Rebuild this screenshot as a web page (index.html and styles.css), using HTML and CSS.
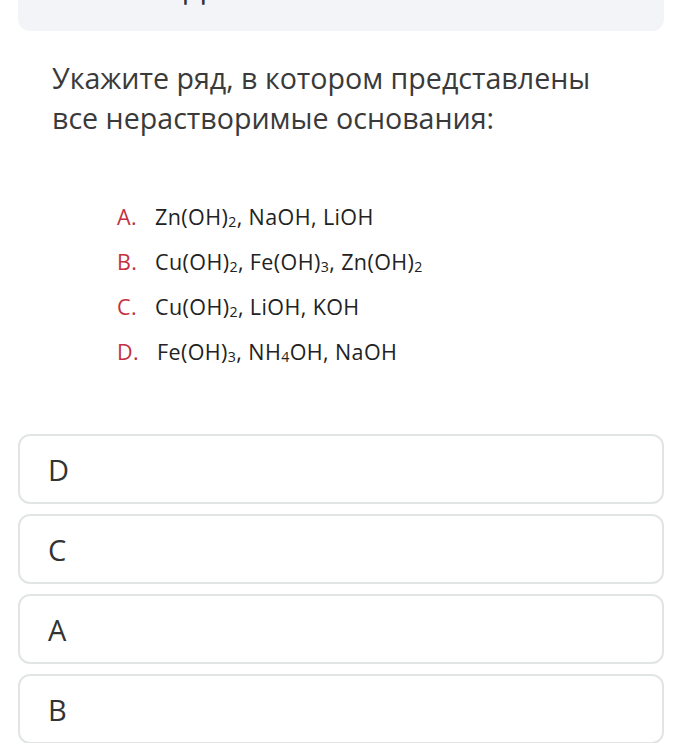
FILE: index.html
```html
<!DOCTYPE html>
<html lang="ru">
<head>
<meta charset="utf-8">
<link rel="stylesheet" href="styles.css">
</head>
<body>
<div class="page">
  <div class="head-card">
    <div class="head-title">Дополнительно</div>
  </div>
  <div class="question">Укажите ряд, в котором представлены все нерастворимые основания:</div>
  <ul class="chem">
    <li class="chem-row"><span class="chem-key">A.</span><span class="chem-val">Zn(OH)<sub>2</sub>, NaOH, LiOH</span></li>
    <li class="chem-row"><span class="chem-key">B.</span><span class="chem-val">Cu(OH)<sub>2</sub>, Fe(OH)<sub>3</sub>, Zn(OH)<sub>2</sub></span></li>
    <li class="chem-row"><span class="chem-key">C.</span><span class="chem-val">Cu(OH)<sub>2</sub>, LiOH, KOH</span></li>
    <li class="chem-row"><span class="chem-key">D.</span><span class="chem-val chem-val-d">Fe(OH)<sub>3</sub>, NH<sub>4</sub>OH, NaOH</span></li>
  </ul>
  <div class="options">
    <div class="option">D</div>
    <div class="option">C</div>
    <div class="option">A</div>
    <div class="option">B</div>
  </div>
</div>
</body>
</html>
```
FILE: styles.css
```css
html, body {
  margin: 0;
  padding: 0;
  background: #ffffff;
}
body {
  font-family: "Open Sans", "Liberation Sans", sans-serif;
  color: #333333;
  overflow: hidden;
}
.page {
  padding: 0 22px 0 18px;
}
.head-card {
  margin-top: -49px;
  padding: 16px 0 24px 166px;
  background: #f3f4f8;
  border-radius: 0 0 12px 12px;
}
.head-title {
  font-size: 31px;
  line-height: 40px;
  color: #333;
  white-space: nowrap;
  overflow: hidden;
}
.question {
  margin: 27px 0 0 34px;
  font-size: 28.6px;
  line-height: 40px;
  color: #3a3a3a;
  width: 580px;
}
.chem {
  list-style: none;
  margin: 56px 0 0 99px;
  padding: 0;
}
.chem-row {
  display: flex;
  height: 45px;
  align-items: center;
  font-size: 21.5px;
  letter-spacing: 0.4px;
}
.chem-key {
  width: 38px;
  color: #c43040;
}
.chem-val {
  color: #222222;
  font-weight: 500;
}
.chem-val-d {
  margin-left: 2px;
}
.chem-val sub {
  font-size: 0.66em;
  vertical-align: -0.15em;
  line-height: 0;
}
.options {
  margin-top: 60px;
  display: flex;
  flex-direction: column;
  gap: 10px;
}
.option {
  height: 66px;
  border: 2px solid #e1e5e5;
  border-radius: 12px;
  display: flex;
  align-items: center;
  padding-left: 28px;
  font-size: 29px;
  color: #333;
}
```
